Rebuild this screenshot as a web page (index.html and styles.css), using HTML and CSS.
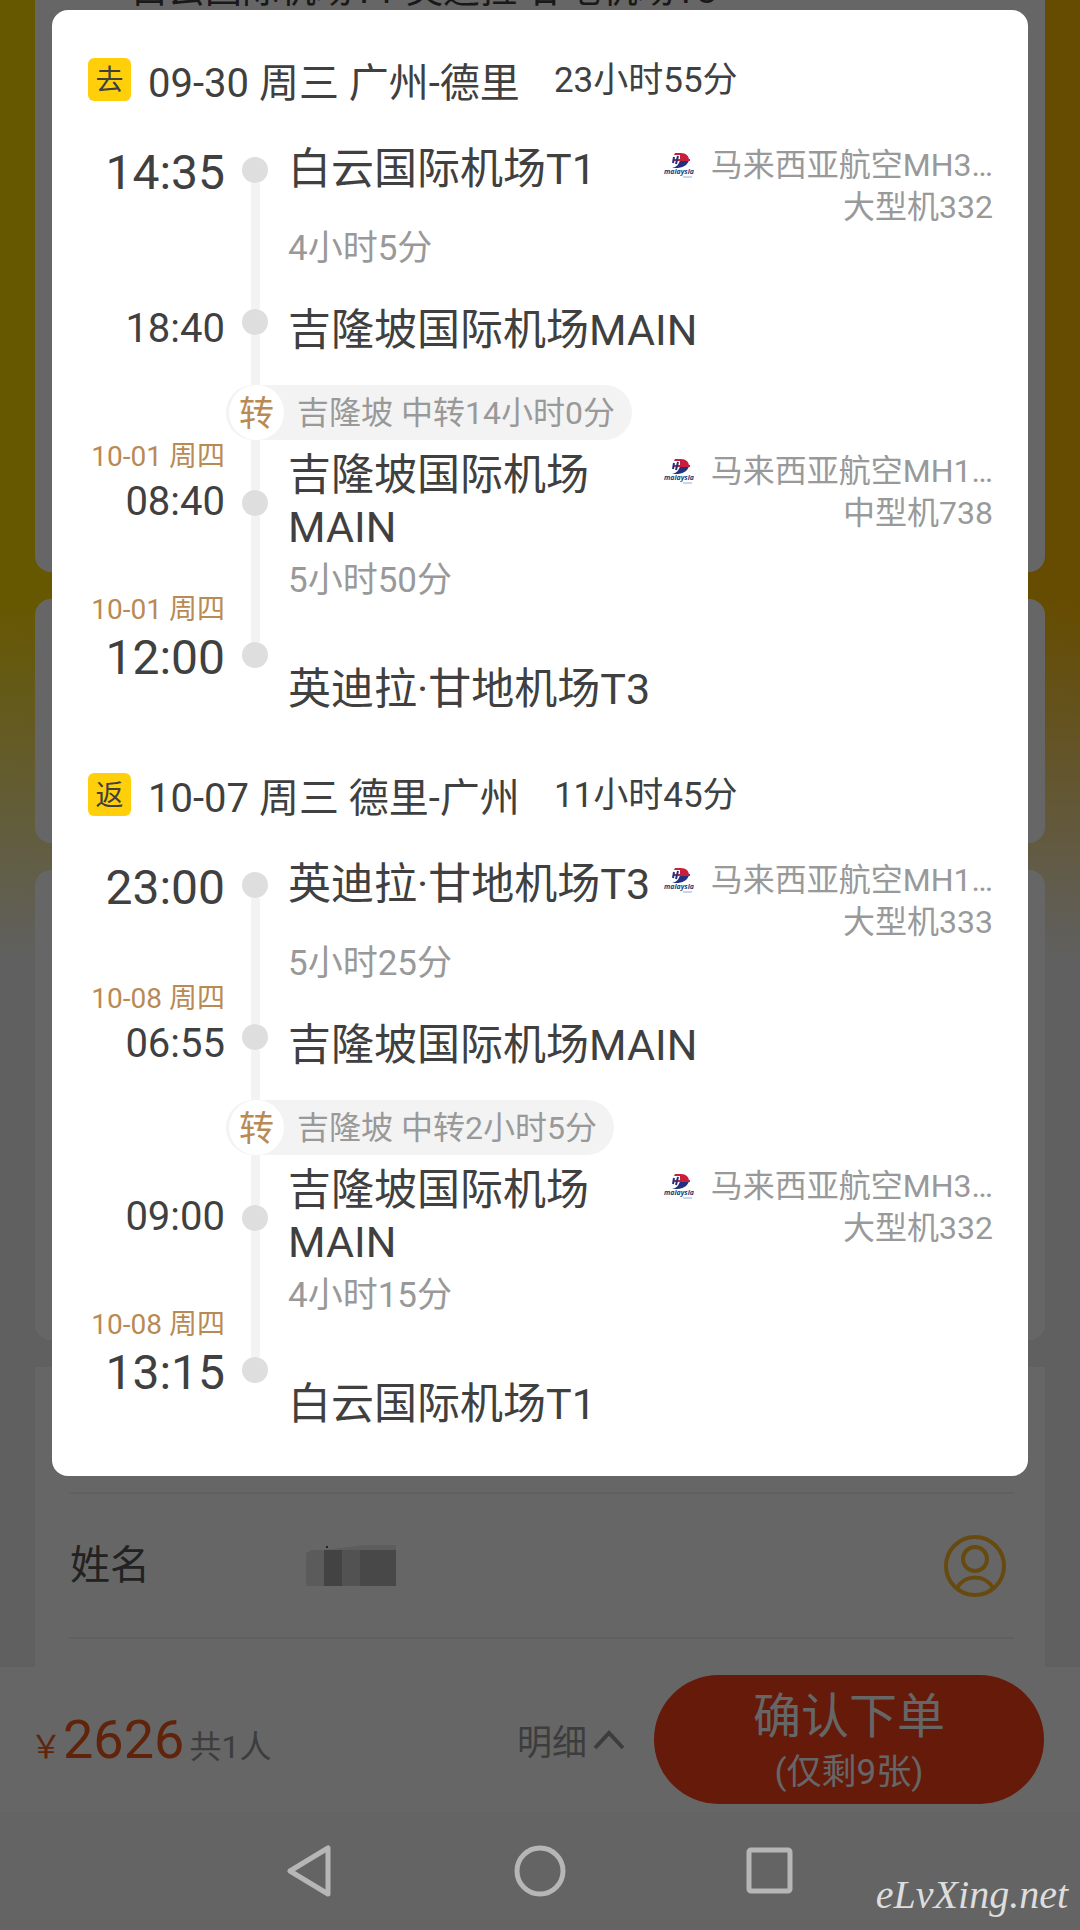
FILE: index.html
```html
<!DOCTYPE html>
<html lang="zh-CN">
<head>
    <meta charset="UTF-8">
    <meta name="viewport" content="width=device-width, initial-scale=1.0">
    <title>确认下单</title>
    <link rel="stylesheet" href="styles.css">
</head>
<body>
    <!-- Airline logo, reused by every leg -->
    <svg class="defs" aria-hidden="true">
        <symbol id="mh" viewBox="0 0 30 26">
            <path d="M11 1 H17 C22 1 25 4 25 8 H16 V3 H10 Z" fill="#c8203c"/>
            <path d="M16 8 H25 C24 12 21 15 14 16 H8 C13 15 15 12 16 8 Z" fill="#25307c"/>
            <path d="M9 8 H26" stroke="#c8203c" stroke-width="2" fill="none"/>
            <path d="M14 4 L12 12 M10 5 L9 11" stroke="#25307c" stroke-width="2"/>
            <text x="0" y="22" class="logo-text">malaysia</text>
            <path d="M19 25 H28" stroke="#8fb0d0" stroke-width="1"/>
        </symbol>
    </svg>

    <main class="page">
        <div class="card card-route">
            <p>白云国际机场T1-英迪拉·甘地机场T3</p>
        </div>
        <div class="card card-ticket"></div>
        <div class="card card-notice"></div>
        <div class="card card-passenger">
            <div class="passenger">
                <span class="label">姓名</span>
                <svg class="masked" width="92" height="42" viewBox="0 0 92 42" role="img" aria-label="姓名">
                    <path d="M0 8 L6 5 H18 V41 H0 Z" fill="#e4e4e4"/>
                    <path d="M18 5 L90 -4 V5 Z" fill="#e8e8e8"/>
                    <rect x="18" y="5" width="18" height="36" fill="#a8a8a8"/>
                    <rect x="36" y="5" width="18" height="36" fill="#cecece"/>
                    <rect x="54" y="5" width="36" height="36" fill="#b4b4b4"/>
                    <circle cx="21" cy="2" r="1" fill="#222"/>
                </svg>
                <button type="button" class="contact" aria-label="常用旅客">
                    <svg width="62" height="62" viewBox="0 0 62 62" fill="none" stroke="#ffb82a" stroke-width="4">
                        <circle cx="31" cy="31" r="29"/>
                        <circle cx="31" cy="24" r="12"/>
                        <path d="M13 53 C21 39 41 39 49 53"/>
                    </svg>
                </button>
            </div>
        </div>
    </main>

    <footer class="order-bar">
        <p class="price"><span class="currency">&#xFFE5;</span><strong>2626</strong><span class="count">共1人</span></p>
        <button type="button" class="detail">明细
            <svg width="32" height="20" viewBox="0 0 32 20" fill="none" stroke="#999" stroke-width="4"><path d="M2 18 L16 3 L30 18"/></svg>
        </button>
        <button type="button" class="submit"><span>确认下单</span><small>(仅剩9张)</small></button>
    </footer>

    <nav class="system-nav">
        <button type="button" aria-label="返回">
            <svg width="52" height="52" viewBox="0 0 52 52"><path d="M6 26 L44 3 V49 Z"/></svg>
        </button>
        <button type="button" aria-label="主页">
            <svg width="52" height="52" viewBox="0 0 52 52"><circle cx="26" cy="26" r="23"/></svg>
        </button>
        <button type="button" aria-label="最近任务">
            <svg width="52" height="52" viewBox="0 0 52 52"><rect x="5" y="5" width="41" height="41" rx="2"/></svg>
        </button>
        <span class="watermark">eLvXing.net</span>
    </nav>

    <div class="overlay">
        <div class="modal" role="dialog" aria-label="航班详情">

            <!-- Outbound -->
            <section class="trip">
                <h2><span class="badge">去</span><span class="route">09-30 周三 广州-德里</span><span class="total">23小时55分</span></h2>

                <div class="leg">
                    <div class="times">
                        <time class="big">14:35</time>
                        <p class="date arrive"></p>
                        <time>18:40</time>
                    </div>
                    <div class="rail"><i class="lead"></i><i class="dot"></i><i class="line"></i><i class="dot"></i><i class="tail"></i></div>
                    <div class="info">
                        <p class="place">白云国际机场T1</p>
                        <div class="airline">
                            <p><svg width="30" height="26"><use href="#mh"/></svg>马来西亚航空MH3…</p>
                            <p>大型机332</p>
                        </div>
                        <p class="duration">4小时5分</p>
                        <p class="place to">吉隆坡国际机场MAIN</p>
                    </div>
                </div>

                <div class="transfer"><span class="mark">转</span>吉隆坡 中转14小时0分</div>

                <div class="leg last">
                    <div class="times">
                        <p class="date">10-01 周四</p>
                        <time>08:40</time>
                        <p class="date arrive">10-01 周四</p>
                        <time class="big">12:00</time>
                    </div>
                    <div class="rail"><i class="lead"></i><i class="dot"></i><i class="line"></i><i class="dot"></i></div>
                    <div class="info">
                        <p class="place">吉隆坡国际机场MAIN</p>
                        <div class="airline">
                            <p><svg width="30" height="26"><use href="#mh"/></svg>马来西亚航空MH1…</p>
                            <p>中型机738</p>
                        </div>
                        <p class="duration">5小时50分</p>
                        <p class="place to">英迪拉·甘地机场T3</p>
                    </div>
                </div>
            </section>

            <!-- Return -->
            <section class="trip">
                <h2><span class="badge">返</span><span class="route">10-07 周三 德里-广州</span><span class="total">11小时45分</span></h2>

                <div class="leg">
                    <div class="times">
                        <time class="big">23:00</time>
                        <p class="date arrive">10-08 周四</p>
                        <time>06:55</time>
                    </div>
                    <div class="rail"><i class="lead"></i><i class="dot"></i><i class="line"></i><i class="dot"></i><i class="tail"></i></div>
                    <div class="info">
                        <p class="place">英迪拉·甘地机场T3</p>
                        <div class="airline">
                            <p><svg width="30" height="26"><use href="#mh"/></svg>马来西亚航空MH1…</p>
                            <p>大型机333</p>
                        </div>
                        <p class="duration">5小时25分</p>
                        <p class="place to">吉隆坡国际机场MAIN</p>
                    </div>
                </div>

                <div class="transfer"><span class="mark">转</span>吉隆坡 中转2小时5分</div>

                <div class="leg last">
                    <div class="times">
                        <p class="date"></p>
                        <time>09:00</time>
                        <p class="date arrive">10-08 周四</p>
                        <time class="big">13:15</time>
                    </div>
                    <div class="rail"><i class="lead"></i><i class="dot"></i><i class="line"></i><i class="dot"></i></div>
                    <div class="info">
                        <p class="place">吉隆坡国际机场MAIN</p>
                        <div class="airline">
                            <p><svg width="30" height="26"><use href="#mh"/></svg>马来西亚航空MH3…</p>
                            <p>大型机332</p>
                        </div>
                        <p class="duration">4小时15分</p>
                        <p class="place to">白云国际机场T1</p>
                    </div>
                </div>
            </section>
        </div>
    </div>
</body>
</html>
```
FILE: styles.css
```css
* {
    box-sizing: border-box;
}

body {
    margin: 0;
    min-height: 100vh;
    display: flex;
    flex-direction: column;
    background: #fff;
    font-family: Roboto, "Noto Sans CJK SC", sans-serif;
    color: #404040;
}

p, h2 {
    margin: 0;
    font-weight: normal;
}

button {
    border: none;
    padding: 0;
    background: none;
    font-family: inherit;
    cursor: pointer;
}

svg {
    display: block;
}

.defs {
    display: none;
}

.logo-text {
    font: italic bold 7px "Open Sans", sans-serif;
    fill: #1c3f7c;
}

/* Page behind the dialog */
.page {
    flex: 1;
    display: flex;
    flex-direction: column;
    gap: 27px;
    padding: 0 35px;
    overflow: hidden;
    background:
        linear-gradient(to bottom, rgba(240, 240, 240, 0) 600px, #f0f0f0 960px),
        linear-gradient(to right, #ffdc00, #ffbe00);
}

.card {
    background: #fff;
    border-radius: 16px;
}

.card-route {
    min-height: 608px;
    margin-top: -36px;
    padding-left: 96px;
    font-size: 37px;
    line-height: 54px;
}

.card-ticket {
    min-height: 244px;
}

.card-notice {
    min-height: 470px;
}

.card-passenger {
    flex: 1;
    border-radius: 0;
    padding: 125px 31px 28px 34px;
}

.passenger {
    display: flex;
    align-items: center;
    height: 147px;
    padding: 0 8px 0 1px;
    border-top: 2px solid #f0f0f0;
    border-bottom: 2px solid #f0f0f0;
}

.label {
    width: 236px;
    font-size: 40px;
    line-height: 48px;
    color: #555;
}

.contact {
    margin-left: auto;
}

/* Bottom order bar */
.order-bar {
    display: flex;
    align-items: center;
    height: 145px;
    padding: 0 36px 0 30px;
    background: #fff;
}

.price {
    flex: 1;
    color: #f05a1e;
    font-size: 32px;
}

.price strong {
    font-size: 54px;
    font-weight: normal;
    margin: 0 5px 0 1px;
}

.count {
    color: #999;
}

.detail {
    display: flex;
    align-items: center;
    gap: 6px;
    margin-right: 29px;
    font-size: 35px;
    color: #999;
}

.submit {
    display: flex;
    flex-direction: column;
    align-items: center;
    justify-content: center;
    width: 390px;
    height: 129px;
    padding-top: 6px;
    border-radius: 65px;
    background: #fc411a;
    color: #fff;
    font-size: 48px;
    line-height: 60px;
}

.submit small {
    font-size: 35px;
    line-height: 52px;
}

/* Phone navigation keys */
.system-nav {
    position: relative;
    z-index: 2;
    display: flex;
    justify-content: center;
    align-items: center;
    gap: 178px;
    height: 118px;
    background: #646464;
}

.system-nav svg {
    fill: none;
    stroke: #b6b6b6;
    stroke-width: 5;
    stroke-linejoin: round;
}

.watermark {
    position: absolute;
    right: 12px;
    bottom: 12px;
    font: italic 40px "Liberation Serif", serif;
    color: #ddd;
}

/* Dialog */
.overlay {
    position: absolute;
    inset: 0;
    padding: 10px 52px;
    background: rgba(0, 0, 0, 0.6);
}

.modal {
    padding: 48px 35px 47px 36px;
    background: #fff;
    border-radius: 16px;
}

.trip + .trip {
    margin-top: 59px;
}

.trip h2 {
    display: flex;
    align-items: center;
    height: 43px;
    margin-bottom: 41px;
    font-size: 40px;
}

.badge {
    width: 43px;
    height: 43px;
    margin-right: 17px;
    border-radius: 6px;
    background: #ffd00a;
    font-size: 28px;
    line-height: 46px;
    text-align: center;
}

.total {
    margin-left: 34px;
    font-size: 35px;
    line-height: 46px;
    padding-top: 2px;
}

/* One flight: times, dotted rail, airports */
.leg {
    display: flex;
}

.times {
    display: flex;
    flex-direction: column;
    width: 137px;
    margin-right: 17px;
    padding-top: 1px;
    text-align: right;
}

.times time {
    font-size: 40px;
    line-height: 54px;
}

.times .big {
    font-size: 48px;
    line-height: 60px;
}

.date {
    min-height: 28px;
    margin-bottom: 4px;
    font-size: 28px;
    line-height: 28px;
    color: #b98a54;
    white-space: nowrap;
}

.arrive {
    margin-top: 67px;
}

.rail {
    display: flex;
    flex-direction: column;
    align-items: center;
    width: 26px;
    margin-right: 20px;
}

.lead {
    width: 9px;
    height: 15px;
}

.line {
    width: 9px;
    height: 126px;
    background: #f3f3f3;
}

.tail {
    flex: 1;
    width: 9px;
    background: #f3f3f3;
}

.dot {
    width: 26px;
    height: 26px;
    border-radius: 50%;
    background: #dedede;
}

.info {
    flex: 1;
    display: grid;
    grid-template-columns: 1fr 329px;
    align-items: start;
    padding: 1px 0 29px;
}

.place {
    font-size: 43px;
    line-height: 52px;
}

.duration {
    grid-column: 1;
    margin-top: 31px;
    font-size: 35px;
    line-height: 46px;
    color: #999;
}

.to {
    grid-column: 1 / 3;
    margin-top: 32px;
}

.airline {
    grid-column: 2;
    grid-row: 1 / 3;
    padding-top: 1px;
    font-size: 32px;
    line-height: 42px;
    color: #999;
    text-align: right;
}

.airline p:first-child {
    display: flex;
    align-items: center;
    justify-content: space-between;
}

/* Second flight of a trip */
.last .times {
    padding-top: 3px;
}

.last .lead {
    height: 50px;
    background: #f3f3f3;
}

.last .info {
    padding: 9px 0 0;
}

.last .duration {
    margin-top: 5px;
}

.last .to {
    margin-top: 59px;
}

.last {
    margin-bottom: -1px;
}

.transfer {
    display: flex;
    align-items: center;
    width: fit-content;
    height: 55px;
    margin-left: 138px;
    padding: 0 17px 0 3px;
    border-radius: 28px;
    background: #f3f3f3;
    font-size: 32px;
    line-height: 40px;
    color: #999;
}

.mark {
    width: 55px;
    height: 55px;
    margin-right: 13px;
    border-radius: 50%;
    background: #fff;
    font-size: 35px;
    line-height: 60px;
    text-align: center;
    color: #b98a54;
}
```
